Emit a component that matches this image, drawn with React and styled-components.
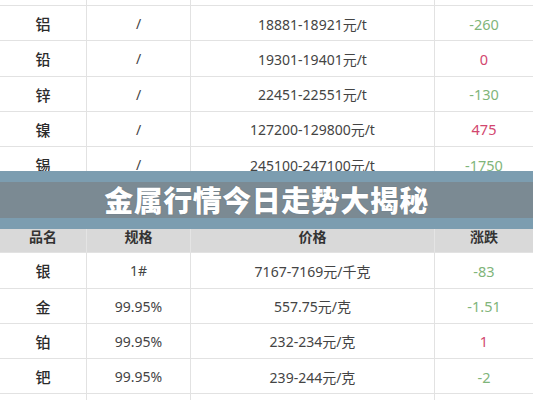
import React from "react";
import styled, { createGlobalStyle } from "styled-components";

const Global = createGlobalStyle`
  html, body { margin: 0; padding: 0; background: #ffffff; }
  body { width: 533px; height: 400px; overflow: hidden; }
  #root { width: 533px; height: 400px; }
`;

const Page = styled.div`
  position: relative;
  width: 533px;
  height: 400px;
  overflow: hidden;
  background: #ffffff;
  font-family: "Noto Sans", "Noto Sans CJK SC", sans-serif;
`;

const Table = styled.div`
  display: flex;
  flex-direction: column;
  margin-top: ${(p) => p.$offset || 0}px;
`;

const Row = styled.div`
  display: grid;
  grid-template-columns: 87px 104px 244px 1fr;
  height: ${(p) => p.$h || 35.25}px;
  box-sizing: border-box;
  border-bottom: 1px solid #e2e2e2;
  background: ${(p) => (p.$head ? "#d9d9d9" : "#ffffff")};
`;

const Cell = styled.div`
  display: flex;
  align-items: center;
  justify-content: center;
  border-right: 1px solid ${(p) => (p.$head ? "#e4e4e4" : "#e2e2e2")};
  &:last-child { border-right: none; }
  font-size: 14px;
  color: #444444;
  white-space: nowrap;
  padding-top: ${(p) => (p.$head ? 0 : 1)}px;
`;

const NameCell = styled(Cell)`
  font-family: "Noto Sans CJK SC", sans-serif;
  font-size: 15px;
  font-weight: 500;
  color: #2b2b2b;
`;

const HeadCell = styled(Cell)`
  font-family: "Noto Sans CJK SC", sans-serif;
  font-size: 14px;
  font-weight: 700;
  color: #333333;
  padding-bottom: 2px;
`;

const ChangeCell = styled(Cell)`
  color: ${(p) => (p.$up ? "#d2466e" : "#7fb57a")};
  font-size: 14.5px;
`;

const Banner = styled.div`
  position: absolute;
  left: 0;
  right: 0;
  top: 171px;
  height: 58px;
  background: #7c9db0;
  display: flex;
  align-items: center;
`;

const BannerStrip = styled.div`
  flex: 1;
  height: 36px;
  background: #7b8a93;
  display: flex;
  align-items: center;
  justify-content: center;
`;

const BannerTitle = styled.h1`
  margin: 0;
  font-family: "Noto Sans CJK SC", sans-serif;
  font-weight: 900;
  font-size: 29px;
  line-height: 1;
  color: #ffffff;
  letter-spacing: 0.5px;
  text-shadow: 0 0 1px rgba(60, 70, 80, 0.5);
  padding-left: 0;
  padding-bottom: 1px;
`;

const top = [
  ["铝", "/", "18881-18921元/t", "-260", false],
  ["铅", "/", "19301-19401元/t", "0", true],
  ["锌", "/", "22451-22551元/t", "-130", false],
  ["镍", "/", "127200-129800元/t", "475", true],
  ["锡", "/", "245100-247100元/t", "-1750", false],
];

const bottom = [
  ["银", "1#", "7167-7169元/千克", "-83", false],
  ["金", "99.95%", "557.75元/克", "-1.51", false],
  ["铂", "99.95%", "232-234元/克", "1", true],
  ["钯", "99.95%", "239-244元/克", "-2", false],
  ["", "", "", "", false],
];

const DataRow = ({ r }) => (
  <Row>
    <NameCell>{r[0]}</NameCell>
    <Cell>{r[1]}</Cell>
    <Cell>{r[2]}</Cell>
    <ChangeCell $up={r[4]}>{r[3]}</ChangeCell>
  </Row>
);

export default function App() {
  return (
    <Page>
      <Global />
      <Table>
        <Row $h={6}>
          <Cell />
          <Cell />
          <Cell />
          <Cell />
        </Row>
        {top.map((r, i) => (
          <DataRow key={i} r={r} />
        ))}
      </Table>
      <Table $offset={39}>
        <Row $head $h={32}>
          <HeadCell $head>品名</HeadCell>
          <HeadCell $head>规格</HeadCell>
          <HeadCell $head>价格</HeadCell>
          <HeadCell $head>涨跌</HeadCell>
        </Row>
        {bottom.map((r, i) => (
          <DataRow key={i} r={r} />
        ))}
      </Table>
      <Banner>
        <BannerStrip>
          <BannerTitle>金属行情今日走势大揭秘</BannerTitle>
        </BannerStrip>
      </Banner>
    </Page>
  );
}
